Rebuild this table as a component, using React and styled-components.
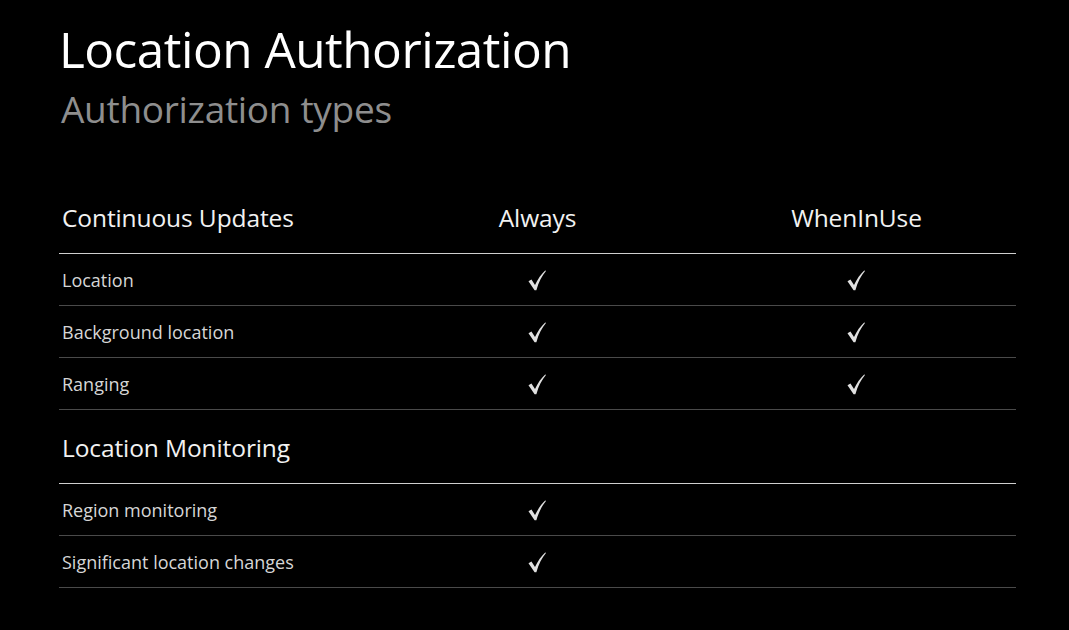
import React from "react";
import styled, { createGlobalStyle } from "styled-components";

const Global = createGlobalStyle`
  html, body { margin: 0; padding: 0; background: #000; }
  body { font-family: "Open Sans", "Liberation Sans", sans-serif; }
`;

const Page = styled.div`
  width: 1069px;
  height: 630px;
  box-sizing: border-box;
  background: #000;
  padding: 18px 53px 0 59px;
  overflow: hidden;
`;

const Title = styled.h1`
  margin: 0;
  font-weight: 400;
  font-size: 49.5px;
  line-height: 62px;
  color: #fff;
  letter-spacing: -0.5px;
`;

const Subtitle = styled.h2`
  margin: 5px 0 0;
  font-weight: 400;
  font-size: 37px;
  line-height: 48px;
  color: #8e8e8e;
  padding-left: 2px;
  letter-spacing: -0.3px;
`;

const Table = styled.div`
  margin-top: 47px;
  display: flex;
  flex-direction: column;
`;

const Row = styled.div`
  display: grid;
  grid-template-columns: 1fr 1fr 1fr;
  align-items: ${(p) => (p.$header ? "end" : "center")};
  height: ${(p) => (p.$header ? "74px" : "52px")};
  padding-bottom: ${(p) => (p.$header ? "19px" : "0")};
  box-sizing: border-box;
  border-bottom: ${(p) => (p.$header ? "1.5px solid #cfcfcf" : "1px solid #4a4a4a")};
`;

const HeadCell = styled.div`
  font-size: 24.5px;
  line-height: 32px;
  color: #f2f2f2;
  text-align: ${(p) => (p.$center ? "center" : "left")};
  padding-left: ${(p) => (p.$center ? "0" : "3px")};
  letter-spacing: -0.1px;
`;

const Cell = styled.div`
  font-size: 18px;
  color: #d6d6d6;
  padding-left: 3px;
  padding-top: 1px;
`;

const CheckCell = styled.div`
  display: flex;
  justify-content: center;
  align-items: center;
  padding-right: 1px;
  padding-top: 2px;
`;

const Check = () => (
  <svg width="18" height="21" viewBox="0 0 17 20">
    <path
      d="M0.4 10.6 L3.2 9.1 L6.6 14.4 C9.4 8.6 12.4 4.1 16.5 0.3 L16.9 1.3 C13.2 5.6 10.2 11.4 7.9 19.3 L6.2 19.3 Z"
      fill="#e0e0e0"
    />
  </svg>
);

const sections = [
  {
    head: "Continuous Updates",
    cols: ["Always", "WhenInUse"],
    rows: [
      ["Location", true, true],
      ["Background location", true, true],
      ["Ranging", true, true],
    ],
  },
  {
    head: "Location Monitoring",
    cols: ["", ""],
    rows: [
      ["Region monitoring", true, false],
      ["Significant location changes", true, false],
    ],
  },
];

export default function App() {
  return (
    <>
      <Global />
      <Page>
        <Title>Location Authorization</Title>
        <Subtitle>Authorization types</Subtitle>
        <Table>
          {sections.map((s) => (
            <React.Fragment key={s.head}>
              <Row $header>
                <HeadCell>{s.head}</HeadCell>
                <HeadCell $center>{s.cols[0]}</HeadCell>
                <HeadCell $center>{s.cols[1]}</HeadCell>
              </Row>
              {s.rows.map((r) => (
                <Row key={r[0]}>
                  <Cell>{r[0]}</Cell>
                  <CheckCell>{r[1] && <Check />}</CheckCell>
                  <CheckCell>{r[2] && <Check />}</CheckCell>
                </Row>
              ))}
            </React.Fragment>
          ))}
        </Table>
      </Page>
    </>
  );
}
